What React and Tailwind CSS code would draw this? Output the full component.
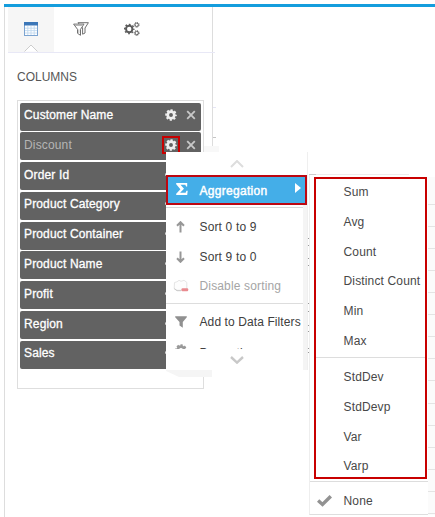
import React from 'react';

const columns = ['Customer Name', 'Discount', 'Order Id', 'Product Category', 'Product Container', 'Product Name', 'Profit', 'Region', 'Sales'];
const basic = ['Sum', 'Avg', 'Count', 'Distinct Count', 'Min', 'Max'];
const stats = ['StdDev', 'StdDevp', 'Var', 'Varp'];
const gridLines = Array.from({ length: 15 }, (_, i) => i);
const marks = [238, 245, 258, 265, 303, 311, 325, 331, 348, 352];

function Gear({ className }) {
  return (
    <svg viewBox="0 0 12 12" className={className} fill="none" stroke="currentColor">
      <circle cx="6" cy="6" r="3.3" strokeWidth="2.7" />
      <circle cx="6" cy="6" r="4.8" strokeWidth="2" strokeDasharray="2.1 1.67" strokeDashoffset="1.05" />
    </svg>
  );
}

function TableIcon() {
  return (
    <svg viewBox="0 0 14 14" className="h-[14px] w-[14px]">
      <rect x="0.5" y="0.5" width="13" height="13" fill="#fff" stroke="#7ca4d1" />
      <path d="M3.8 4v9M7 4v9M10.2 4v9M1 6.2h12M1 8.6h12M1 11h12" stroke="#bcd6ee" strokeWidth="0.8" />
      <path d="M0 0h14v3.5H0z" fill="#3c77b8" />
    </svg>
  );
}

function FiltersIcon() {
  return (
    <svg viewBox="0 0 16 14" className="h-[14px] w-4" fill="#fff" stroke="#707070" strokeWidth="1" strokeLinejoin="round">
      <path d="M5 .7h10.4L12 6v5l-2.4 1.2V6z" />
      <path d="M.6 2.1H11L7.5 7.3v6L4.5 11.3v-4z" />
      <path d="M2.2 3.5h7M5.8 7.5v3.5" strokeWidth=".5" />
    </svg>
  );
}

function GearsIcon() {
  return (
    <svg viewBox="0 0 16 14" className="h-[14px] w-4" fill="none" stroke="#5c5c5c">
      <circle cx="5.2" cy="7" r="3.2" strokeWidth="2" />
      <circle cx="5.2" cy="7" r="4.6" strokeWidth="1.5" strokeDasharray="1.8 1.813" strokeDashoffset=".9" />
      <circle cx="12.7" cy="2.8" r="1.7" strokeWidth="1" />
      <circle cx="12.7" cy="2.8" r="2.5" strokeWidth=".9" strokeDasharray="1 .963" />
      <circle cx="12.7" cy="11" r="1.7" strokeWidth="1" />
      <circle cx="12.7" cy="11" r="2.5" strokeWidth=".9" strokeDasharray="1 .963" />
    </svg>
  );
}

function Arrow({ down }) {
  return (
    <svg viewBox="0 0 9 12" className={down ? 'h-3 w-[9px] rotate-180' : 'h-3 w-[9px]'} fill="none" stroke="#979797" strokeWidth="2">
      <path d="M4.5 11.5V1.6M1 4.7l3.5-3.5L8 4.7" />
    </svg>
  );
}

function ClearIcon() {
  return (
    <svg viewBox="0 0 16 14" className="h-[14px] w-4">
      <path d="M1.5 3.5L4 2.8l2-1.5 2 1 3-1 2.8 2v8H4L1.2 9.5z" fill="#fdfdfd" stroke="#dedede" strokeWidth=".8" />
      <path d="M1.2 9.7L4 11.7h4" stroke="#b8b8b8" strokeWidth=".7" fill="none" />
      <rect x="8.5" y="9.3" width="6.7" height="3" rx="1" fill="#e98b90" />
    </svg>
  );
}

function FilterIcon() {
  return (
    <svg viewBox="0 0 12 12" className="h-3 w-3" fill="#909090">
      <path d="M.2.3h11.6v1L7.8 6v5.8L4.5 9.5V6L.2 1.3z" />
    </svg>
  );
}

function MenuItem({ icon, children, muted }) {
  return (
    <div className="flex h-[29.8px] shrink-0 items-center">
      <div className="flex w-[33.5px] justify-center pr-[4px]">{icon}</div>
      <span className={muted ? 'text-[#a5a5a5]' : 'text-[#404040]'}>{children}</span>
    </div>
  );
}

export default function App() {
  return (
    <div className="relative h-[517px] w-[435px] overflow-hidden bg-white pl-1 pt-1 font-['Liberation_Sans',Arial,sans-serif] text-[12px] leading-[14px] tracking-[0.15px]">
      <div className="h-[3px] bg-[#149ddd]" />
      <div className="h-[510px] border-l border-[#dddddd]">
        <div className="flex h-[145px] w-[208px] flex-col border-r border-[#dddddd] pl-[3px]">
          <div className="flex h-[46px] w-[207px] shrink-0 border-b border-[#e8e8f6]">
            <div className="flex h-[45px] w-[46px] flex-col items-center bg-[#f6f6f6] pt-[15px]">
              <TableIcon />
              <svg viewBox="0 0 14 8" className="mt-[8px] h-2 w-[14px] shrink-0" fill="#fff" stroke="#cdcdcd"><path d="M.5 7.5L7 1l6.5 6.5" /></svg>
            </div>
            <div className="ml-[19px] mt-[15px]"><FiltersIcon /></div>
            <div className="ml-[35px] mt-[15px]"><GearsIcon /></div>
          </div>
          <div className="ml-[9px] mt-[17px] tracking-normal text-[#565656]">COLUMNS</div>
          <div className="ml-[9px] mt-[16px] h-[289px] w-[187px] shrink-0 border border-[#dedede] pl-[1.5px] pt-[1.5px]">
            <div className="flex w-[181px] flex-col gap-[1.8px]">
              {columns.map((name, i) => (
                <div key={name} className="flex h-7 items-center rounded-[2px] bg-[#626262] pb-[3px] pl-[4.5px] pr-[5px] text-white">
                  <span className={i === 1 ? 'flex-1 text-[#b5b5b5]' : 'flex-1 [-webkit-text-stroke:0.3px_white]'}>{name}</span>
                  <div className={i === 1 ? 'mr-[6px] flex h-[18px] w-[18px] items-center justify-center border-2 border-[#c80000]' : 'mr-[6px] flex h-[18px] w-[18px] items-center justify-center'}>
                    <Gear className="h-3 w-3 shrink-0 text-[#eeeeee]" />
                  </div>
                  <svg viewBox="0 0 10 10" className="h-[10px] w-[10px]" fill="none" stroke="#c8c8c8" strokeWidth="1.8"><path d="M1.2 1.2l7.6 7.6M8.8 1.2L1.2 8.8" /></svg>
                </div>
              ))}
            </div>
          </div>
        </div>
      </div>

      <div className="absolute left-[213px] top-[107px] h-px w-[3px] bg-[#e5e5f5]" />
      <div className="absolute left-[213px] top-[137px] h-px w-[3px] bg-[#c5c5c5]" />
      <div className="absolute left-[204px] top-[146px] h-[7px] w-[15px] bg-[#f8f8f8]" />
      <svg viewBox="0 0 46 7" className="absolute left-[166px] top-[370px] h-[7px] w-[46px]"><path d="M0 0h46v7H13L0 1z" fill="#f5f5f5" /></svg>

      <div className="absolute left-[427px] top-[177px] flex h-[338px] w-2 flex-col bg-[#fbfbfb] pt-[5.6px]">
        {gridLines.map((i) => <div key={i} className="h-[22.1px] shrink-0 border-b border-[#e4e4e4]" />)}
      </div>
      <div className="absolute left-[309px] top-[174px] h-px w-[100px] bg-[#ededed]" />

      <div className="absolute left-[166px] top-[152px] flex h-[218px] w-[142px] flex-col border-r border-[#efefef] bg-white">
        <div className="flex h-[23px] shrink-0 items-center justify-center pt-px">
          <svg viewBox="0 0 14 8" className="h-2 w-[14px]" fill="none" stroke="#dddddd" strokeWidth="2"><path d="M1 7l6-6 6 6" /></svg>
        </div>
        <div className="flex h-[30px] w-[141px] shrink-0 items-center border-2 border-[#bd0711] bg-[#44aee8] text-white">
          <svg viewBox="0 0 12 12" className="ml-[8px] mr-[11.5px] mb-[2px] h-3 w-3" fill="currentColor"><path d="M.2 0h11v3.5h-1.1L9.3 1.8H4.5L8 5.8 4.1 9.8h5.5l.9-2.1h1.2L11.2 12H.2v-1.3l4.2-4.5L.2 1.3z" /></svg>
          <span className="flex-1 pt-[2px] tracking-[0.3px] [-webkit-text-stroke:0.45px_white]">Aggregation</span>
          <svg viewBox="0 0 6 10" className="mb-1 mr-[4px] h-[10px] w-[6px]" fill="#fff"><path d="M0 0l6 5-6 5z" /></svg>
        </div>
        <div className="flex h-[165px] shrink-0 flex-col border-r-[4px] border-[#f4f4f4]">
          <div className="mb-[4px] mt-[2px] h-px shrink-0 bg-[#d8d8d8]" />
          <MenuItem icon={<Arrow />}>Sort 0 to 9</MenuItem>
          <MenuItem icon={<Arrow down />}>Sort 9 to 0</MenuItem>
          <MenuItem muted icon={<ClearIcon />}>Disable sorting</MenuItem>
          <div className="mb-[3px] mt-[2px] h-px shrink-0 bg-[#dddddd]" />
          <MenuItem icon={<FilterIcon />}><span className="whitespace-nowrap tracking-[0.1px]">Add to Data Filters</span></MenuItem>
          <div className="h-[19px] shrink-0 pt-[7px]">
            <div className="flex h-[5px] overflow-hidden">
              <div className="flex w-[33.5px] justify-center pr-[4px]"><Gear className="h-3 w-3 text-[#999999]" /></div>
              <span className="h-[16px] pt-[2px] text-[#404040]">Properties</span>
            </div>
          </div>
          <div className="flex justify-center">
            <svg viewBox="0 0 14 8" className="ml-[5px] h-2 w-[14px]" fill="none" stroke="#c8c8c8" strokeWidth="2.4"><path d="M1 1l6 5.6L13 1" /></svg>
          </div>
        </div>
      </div>

      {marks.map((y) => <div key={y} className="absolute left-[308px] h-px w-px bg-[#999999]" style={{ top: y }} />)}
      <div className="absolute left-[309px] top-[174px] h-px w-[7px] bg-[#cccccc]" />

      <div className="absolute left-[309px] top-[175px] flex h-[340px] w-[119px] flex-col border-b border-l border-b-[#dedede] border-l-[#eeeeee] bg-white pt-[2px] text-[#484848]">
        <div className="ml-[4px] flex h-[302px] w-[113px] shrink-0 flex-col border-2 border-[#c80000]">
          {basic.map((name) => <div key={name} className="flex h-[29.85px] shrink-0 items-center whitespace-nowrap pl-[27.5px] pr-0 first:mt-[-2px]">{name}</div>)}
          <div className="mb-[4px] mt-px h-px shrink-0 bg-[#dddddd]" />
          {stats.map((name) => <div key={name} className="flex h-[29.8px] shrink-0 items-center pl-[27.5px]">{name}</div>)}
        </div>
        <div className="mt-[2px] h-px shrink-0 bg-[#dddddd]" />
        <div className="flex flex-1 items-center pt-[6px]">
          <svg viewBox="0 0 15 12" className="ml-[7px] mr-[11.5px] h-3 w-[15px]" fill="none" stroke="#929292" strokeWidth="3.4"><path d="M1.1 5.5l4.4 4L13.8 1.2" /></svg>
          None
        </div>
      </div>
    </div>
  );
}
